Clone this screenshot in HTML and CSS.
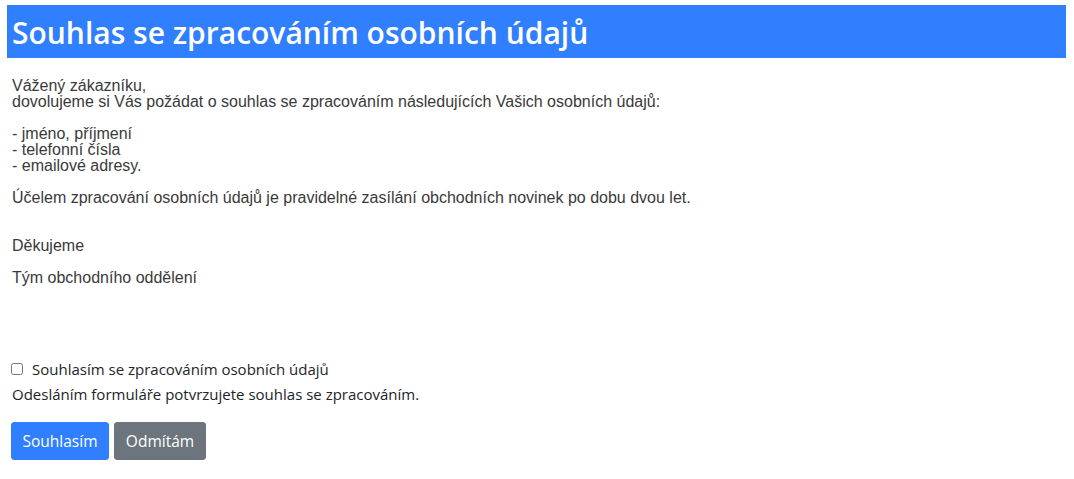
FILE: index.html
```html
<!DOCTYPE html>
<html lang="cs">
<head>
    <meta charset="UTF-8">
    <meta name="viewport" content="width=device-width, initial-scale=1.0">
    <title>Souhlas se zpracováním osobních údajů</title>
    <link rel="stylesheet" href="styles.css">
</head>
<body>
    <h1 class="title">Souhlas se zpracováním osobních údajů</h1>
    <div class="letter">
        <p class="greeting">Vážený zákazníku,<br>dovolujeme si Vás požádat o souhlas se zpracováním následujících Vašich osobních údajů:</p>
        <p class="items">- jméno, příjmení<br>- telefonní čísla<br>- emailové adresy.</p>
        <p class="purpose">Účelem zpracování osobních údajů je pravidelné zasílání obchodních novinek po dobu dvou let.</p>
        <p class="thanks">Děkujeme</p>
        <p class="sign">Tým obchodního oddělení</p>
    </div>
    <form class="consent">
        <label class="check">
            <input type="checkbox" name="agree">
            <span>Souhlasím se zpracováním osobních údajů</span>
        </label>
        <p class="note">Odesláním formuláře potvrzujete souhlas se zpracováním.</p>
        <div class="actions">
            <button type="submit" class="btn btn-primary">Souhlasím</button>
            <button type="button" class="btn btn-secondary">Odmítám</button>
        </div>
    </form>
</body>
</html>
```

FILE: styles.css
```css
body {
    margin: 0;
    padding: 5px 8px 0 7px;
    background: #fff;
}

.title {
    margin: 0;
    padding: 8px 5px 6px;
    background-color: #307fff;
    color: #fff;
    font-family: "Open Sans", sans-serif;
    font-weight: 600;
    font-size: 30px;
    line-height: 39px;
}

.letter {
    padding: 0 5px;
    font-family: "Liberation Sans", Arial, sans-serif;
    font-size: 16px;
    line-height: 16px;
    color: #3a3a3a;
}

.letter p {
    margin: 0;
}

.greeting {
    padding-top: 20px;
}

.items {
    padding-top: 16px;
}

.purpose {
    padding-top: 16px;
}

.thanks {
    padding-top: 32px;
}

.sign {
    padding-top: 16px;
}

.consent {
    padding: 72px 4px 0;
    font-family: "Open Sans", sans-serif;
    font-size: 15px;
    color: #212529;
}

.check {
    display: flex;
    align-items: center;
    gap: 9px;
    line-height: 22px;
}

.check input {
    margin: 0;
    width: 12px;
    height: 12px;
}

.note {
    margin: 3px 0 0 1px;
    line-height: 22px;
}

.actions {
    display: flex;
    gap: 5px;
    margin-top: 17px;
}

.btn {
    font-family: "Open Sans", sans-serif;
    font-size: 15.5px;
    color: #fff;
    border: 1px solid transparent;
    border-radius: 3px;
    padding: 0 10px;
    height: 38px;
}

.btn-primary {
    background-color: #307fff;
    border-color: #307fff;
    width: 98px;
}

.btn-secondary {
    background-color: #6c757d;
    border-color: #6c757d;
    width: 92px;
}
```
